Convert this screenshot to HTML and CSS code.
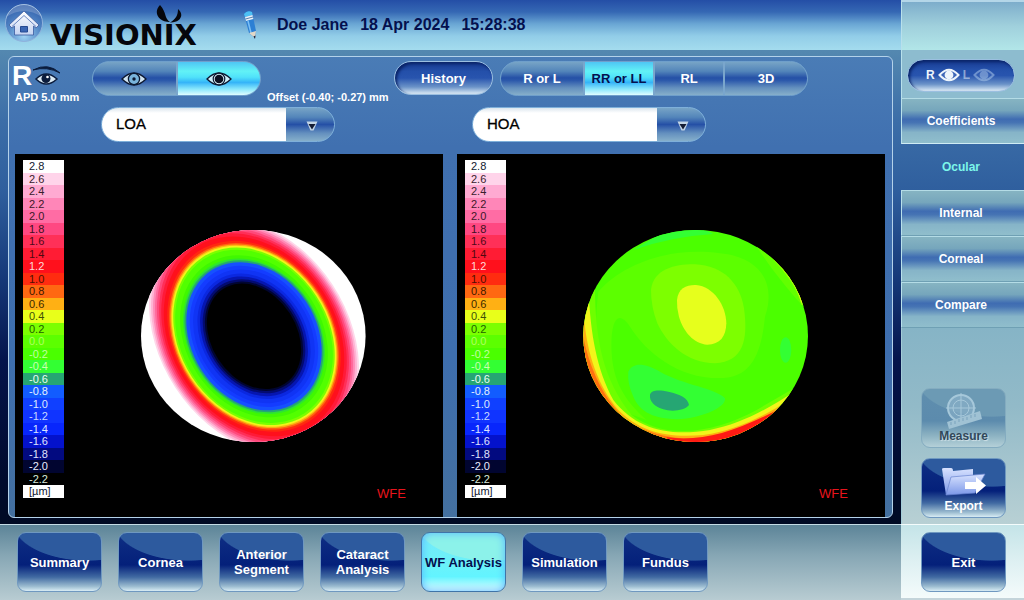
FILE: index.html
```html
<!DOCTYPE html>
<html lang="en">
<head>
<meta charset="utf-8">
<title>Visionix - WF Analysis</title>
<link rel="stylesheet" href="styles.css">
</head>
<body>
<div class="app">
  <header class="header">
    <button class="home" aria-label="Home">
      <svg width="40" height="40" viewBox="0 0 40 40" aria-hidden="true">
        <defs>
          <radialGradient id="ball" cx=".5" cy=".85" r=".9"><stop offset="0" stop-color="#9fd3f4"/><stop offset=".5" stop-color="#5287c6"/><stop offset="1" stop-color="#2a55a4"/></radialGradient>
          <linearGradient id="house" x2="0" y2="1"><stop offset="0" stop-color="#fff"/><stop offset="1" stop-color="#c4d3f2"/></linearGradient>
        </defs>
        <circle cx="20" cy="20" r="18.500" fill="url(#ball)" stroke="#8fb2dc"/>
        <path d="M2 14Q20 2 38 14A19 19 0 0 0 2 14Z" fill="#fff" opacity=".2"/>
        <path d="M20 8L35 22L32 25L29.500 23V32H10.500V23L8 25L5 22Z" fill="url(#house)" stroke="#3a5aa0" stroke-width=".8"/>
        <path d="M20 12.500L8 23.500M20 12.500L32 23.500" stroke="#6a86c0" stroke-width="1"/>
        <path d="M16.500 23.500h7v5.500h-7z" fill="#3a66b4" stroke="#264a92"/>
      </svg>
    </button>
    <div class="logo">VISIONIX
      <svg class="logo-mark" width="28" height="18" viewBox="0 0 28 18" aria-hidden="true">
        <path d="M5 0C-2 7 3 17 15 17C9 13 12 8 5 0Z"/>
        <path d="M23 4C30 10 25 18 15 17.500C21 14 23 10 23 4Z"/>
      </svg>
    </div>
    <svg class="pencil" width="16" height="30" viewBox="0 0 16 30" aria-hidden="true">
      <path d="M1 4Q4 0 9 2L13 21L12 28L6 23Z" fill="#2c7fd4"/>
      <path d="M1 4Q4 0 9 2L9.500 5L2 7Z" fill="#4cc0f4"/>
      <path d="M2 7L9.500 5L10.300 9L3 11Z" fill="#e8f1f8"/>
      <path d="M2.500 9L10 7" stroke="#5b7fae"/>
      <path d="M5 11L8 23" stroke="#7bc0f6" stroke-width="1.500"/>
      <path d="M6 23L13 21L12 28Z" fill="#e2d8c8"/>
      <path d="M10.500 26.500L12.500 25.500L12 29Z" fill="#223"/>
    </svg>
    <div class="patient"><span>Doe Jane</span><span>18 Apr 2024</span><span>15:28:38</span></div>
  </header>

  <main class="panel">
    <div class="toolbar">
      <div class="side">
        <div class="side-eye"><b>R</b>
          <svg width="28" height="22" viewBox="0 0 28 22" aria-hidden="true">
            <path d="M0 5Q15-3 27 8Q14 1 0 5Z" fill="#0b1c3c" stroke="#0b1c3c"/>
            <path d="M3 14Q13 4 24 14Q13 24 3 14Z" fill="#dbeaf4" stroke="#0b1c3c" stroke-width="1.500"/>
            <circle cx="13" cy="13.500" r="4.500" fill="#0b1c3c"/><circle cx="14.500" cy="12" r="1.300" fill="#fff"/>
          </svg>
        </div>
        <div class="note">APD 5.0 mm</div>
      </div>
      <div class="group eyes">
        <button class="seg" aria-label="Small pupil"><svg width="26" height="16" viewBox="0 0 26 16" aria-hidden="true"><path d="M1 8Q13-4 25 8Q13 20 1 8Z" fill="#cfe2f0" stroke="#0c1830" stroke-width="1.300"/><circle cx="13" cy="8" r="5.600" fill="#79b4dc" stroke="#0c1830" stroke-width="1.300"/><circle cx="13" cy="8" r="1.700" fill="#0c1830"/></svg></button>
        <button class="seg on" aria-label="Large pupil"><svg width="26" height="16" viewBox="0 0 26 16" aria-hidden="true"><path d="M1 8Q13-4 25 8Q13 20 1 8Z" fill="#cfeff8" stroke="#0c1830" stroke-width="1.300"/><circle cx="13" cy="8" r="5.800" fill="#d9eef6" stroke="#0c1830" stroke-width="1.200"/><circle cx="13" cy="8" r="4.300" fill="#0c1020"/></svg></button>
      </div>
      <div class="note offset">Offset (-0.40; -0.27) mm</div>
      <button class="pill">History</button>
      <div class="group views">
        <button class="seg wide">R or L</button>
        <button class="seg on">RR or LL</button>
        <button class="seg">RL</button>
        <button class="seg wide">3D</button>
      </div>
    </div>

    <div class="pickers">
      <div class="picker picker-first">
        <select aria-label="Left map"><option>LOA</option><option>HOA</option></select>
        <svg class="arrow" width="12" height="10" viewBox="0 0 12 10" aria-hidden="true"><path d="M.5.5H11.500L7.500 9.500H4.500Z" fill="#c3d5e6"/><path d="M2.500 3H9.500L6 8.500Z" fill="#141c34"/></svg>
      </div>
      <div class="picker">
        <select aria-label="Right map"><option>HOA</option><option>LOA</option></select>
        <svg class="arrow" width="12" height="10" viewBox="0 0 12 10" aria-hidden="true"><path d="M.5.5H11.500L7.500 9.500H4.500Z" fill="#c3d5e6"/><path d="M2.500 3H9.500L6 8.500Z" fill="#141c34"/></svg>
      </div>
    </div>

    <div class="maps">
      <section class="map" aria-label="LOA map">
        <ul class="scale">
          <li class="c1">2.8</li><li class="c2">2.6</li><li class="c3">2.4</li><li class="c4">2.2</li><li class="c5">2.0</li><li class="c6">1.8</li><li class="c7">1.6</li><li class="c8">1.4</li><li class="c9">1.2</li><li class="c10">1.0</li><li class="c11">0.8</li><li class="c12">0.6</li><li class="c13">0.4</li><li class="c14">0.2</li><li class="c15">0.0</li><li class="c16">-0.2</li><li class="c17">-0.4</li><li class="c18">-0.6</li><li class="c19">-0.8</li><li class="c20">-1.0</li><li class="c21">-1.2</li><li class="c22">-1.4</li><li class="c23">-1.6</li><li class="c24">-1.8</li><li class="c25">-2.0</li><li class="c26">-2.2</li><li class="c1">[µm]</li>
        </ul>
        <svg class="plot" viewBox="64 160 371 338">
          <defs><clipPath id="pupil"><ellipse cx="253.300" cy="336" rx="112.300" ry="106"/></clipPath></defs>
          <g clip-path="url(#pupil)">
            <path d="M130 220H380V450H130Z" fill="#fff"/>
            <g transform="translate(254 336.300) rotate(-33.200)">
              <ellipse rx="94" ry="127" fill="#ffd7ea"/>
              <ellipse rx="92.500" ry="124" fill="#ffb4d4"/>
              <ellipse rx="91" ry="121" fill="#ff8cb8"/>
              <ellipse rx="89.400" ry="118.500" fill="#ff6a9c"/>
              <ellipse rx="87.800" ry="116" fill="#ff4a7c"/>
              <ellipse rx="86" ry="113" fill="#ff2f58"/>
              <ellipse rx="84.300" ry="110" fill="#ff1a38"/>
              <ellipse rx="82.300" ry="106.500" fill="#ff101c"/>
              <ellipse rx="79.500" ry="101.500" fill="#ff2a10"/>
              <ellipse rx="78" ry="99" fill="#ff6410"/>
              <ellipse rx="76.800" ry="97.500" fill="#ffae12"/>
              <ellipse rx="75.700" ry="96.200" fill="#f2f51a"/>
              <ellipse rx="74.200" ry="94.300" fill="#7aff00"/>
              <ellipse rx="72.500" ry="92" fill="#52ff00"/>
              <ellipse rx="68" ry="86" fill="#40f800"/>
              <ellipse rx="65.500" ry="82.500" fill="#2fe52f"/>
              <ellipse rx="64.200" ry="80.500" fill="#26a673"/>
              <ellipse rx="62.500" ry="78.500" fill="#1650ff"/>
              <ellipse rx="59" ry="75" fill="#143cff"/>
              <ellipse rx="56" ry="71" fill="#1034f4"/>
              <ellipse rx="51.500" ry="67" fill="#0b28e0"/>
              <ellipse rx="49" ry="64" fill="#0616b0"/>
              <ellipse rx="46.500" ry="61" fill="#030b70"/>
              <ellipse rx="44.500" ry="58.500" fill="#010530"/>
              <ellipse rx="42.500" ry="56.500" fill="#000"/>
            </g>
          </g>
          <text class="wfe" x="377" y="498">WFE</text>
        </svg>
      </section>
      <section class="map" aria-label="HOA map">
        <ul class="scale">
          <li class="c1">2.8</li><li class="c2">2.6</li><li class="c3">2.4</li><li class="c4">2.2</li><li class="c5">2.0</li><li class="c6">1.8</li><li class="c7">1.6</li><li class="c8">1.4</li><li class="c9">1.2</li><li class="c10">1.0</li><li class="c11">0.8</li><li class="c12">0.6</li><li class="c13">0.4</li><li class="c14">0.2</li><li class="c15">0.0</li><li class="c16">-0.2</li><li class="c17">-0.4</li><li class="c18">-0.6</li><li class="c19">-0.8</li><li class="c20">-1.0</li><li class="c21">-1.2</li><li class="c22">-1.4</li><li class="c23">-1.6</li><li class="c24">-1.8</li><li class="c25">-2.0</li><li class="c26">-2.2</li><li class="c1">[µm]</li>
        </ul>
        <svg class="plot" viewBox="506 160 371 338">
          <defs><clipPath id="pupil2"><ellipse cx="377" cy="348" rx="337" ry="318"/></clipPath></defs>
          <g transform="translate(570 220) scale(.3333)">
            <g clip-path="url(#pupil2)">
              <path d="M0 0H750V690H0Z" fill="#4bff00"/>
              <path d="M85 215C160 130 300 80 450 100C570 110 620 190 585 290C575 390 550 470 460 474C330 480 230 400 180 320C140 260 120 310 125 400C130 480 160 540 230 600L120 560C80 470 70 330 85 215Z" fill="#5cff00"/>
              <path d="M560 80C620 170 670 230 720 280V150L600 60Z" fill="#62ff00"/>
              <path d="M190 90Q300 50 430 42Q400 20 300 25Z" fill="#33ff33"/>
              <path d="M243 210C250 145 320 132 375 133C460 137 510 190 522 265C535 360 520 425 435 430C350 430 290 370 262 310Q243 260 243 210Z" fill="#7dff00"/>
              <path d="M321 240C324 205 350 194 378 195C430 200 468 255 469 310C468 350 450 374 412 374C370 370 340 335 327 290Q320 265 321 240Z" fill="#e6ff1c"/>
              <path d="M175 455C190 425 225 430 270 455C340 495 440 505 465 535C470 560 400 595 320 598C240 595 205 570 188 525Q172 490 175 455Z" fill="#33ff33"/>
              <path d="M240 525C243 508 270 510 295 515C330 522 355 535 357 555C345 572 305 576 280 568C255 560 238 545 240 525Z" fill="#26a673"/>
              <ellipse cx="647" cy="390" rx="17" ry="38" fill="#33ff33"/>
              <path d="M75 200C75 360 100 480 185 585C290 665 440 635 560 570L680 500V690H0V200Z" fill="#6eff00"/>
              <path d="M56 220C62 340 80 450 130 540C200 630 300 650 420 630C510 612 590 570 680 510V690H0V220Z" fill="#f2f51a"/>
              <path d="M42 290C50 400 85 500 145 570C210 635 290 655 400 645C490 632 570 595 650 545V690H0V290Z" fill="#ffae12"/>
              <path d="M40 350C55 430 90 510 135 565L160 595C240 650 320 660 400 654C500 640 560 608 650 552V690H0V350Z" fill="#ff7010"/>
              <path d="M290 652C400 666 500 635 640 560V690H290Z" fill="#ff1a14"/>
              <path d="M590 98C650 160 680 200 695 255L730 250V100Z" fill="#9dff00"/>
              <path d="M600 106C655 160 680 200 694 248L730 250V100Z" fill="#f2f51a"/>
              <path d="M618 120C660 160 682 200 694 240L730 240V100Z" fill="#ffc018"/>
            </g>
          </g>
          <text class="wfe" x="819" y="498">WFE</text>
        </svg>
      </section>
    </div>
  </main>

  <aside class="sidebar">
    <div class="side-top"></div>
    <div class="side-toggle">
      <button class="pill eye-toggle" aria-label="Right or left eye">
        <b>R</b><svg width="22" height="14" viewBox="0 0 22 14" aria-hidden="true"><path d="M1.500 7Q11-3.500 20.500 7Q11 17.500 1.500 7Z" fill="#3f68b8" stroke="#eef5fb" stroke-width="2"/><circle cx="11" cy="7" r="4.400" fill="#eef5fb"/></svg>
        <b class="dim">L</b><svg class="dim" width="22" height="14" viewBox="0 0 22 14" aria-hidden="true"><path d="M1.500 7Q11-3.500 20.500 7Q11 17.500 1.500 7Z" fill="#3f68b8" stroke="#b4d0ee" stroke-width="2"/><circle cx="11" cy="7" r="4.400" fill="#b4d0ee"/></svg>
      </button>
    </div>
    <nav class="tabs">
      <button class="tab">Coefficients</button>
      <button class="tab current">Ocular</button>
      <button class="tab">Internal</button>
      <button class="tab">Corneal</button>
      <button class="tab">Compare</button>
    </nav>
    <div class="tools">
      <button class="tile tool off" disabled>
        <svg width="42" height="38" viewBox="0 0 42 38" aria-hidden="true"><g fill="none" stroke="#a6c8da" stroke-width="2"><circle cx="18" cy="17" r="13" fill="#8db4cc" fill-opacity=".6"/><circle cx="18" cy="17" r="8" stroke-width="1"/><path d="M18 2V32M3 17H33" stroke-width="1"/></g><path d="M4 31L37 20L39 28L6 38Z" fill="#a0c2d4"/><path d="M8 31v3M12 30v3M16 28v3M20 27v3M24 26v3M28 24v3M32 23v3" stroke="#7ba3bd"/></svg>
        <span>Measure</span>
      </button>
      <button class="tile tool">
        <svg width="46" height="32" viewBox="0 0 46 32" aria-hidden="true">
          <defs><linearGradient id="folder" x2="0" y2="1"><stop offset="0" stop-color="#d8e2ff"/><stop offset="1" stop-color="#7c98e8"/></linearGradient></defs>
          <path d="M1 2Q1 1 3 1H10Q12 1 12 4L32 2V9L5 28Z" fill="url(#folder)"/>
          <path d="M10 10L44 7L34 26L5 28Z" fill="url(#folder)" stroke="#6984d0" stroke-width=".7"/>
          <path d="M24 15H35V10L45 18.500L35 27V22H24Z" fill="#fff"/>
        </svg>
        <span>Export</span>
      </button>
    </div>
    <div class="side-foot"><button class="tile">Exit</button></div>
  </aside>

  <nav class="modes">
    <button class="tile">Summary</button>
    <button class="tile">Cornea</button>
    <button class="tile">Anterior<br>Segment</button>
    <button class="tile">Cataract<br>Analysis</button>
    <button class="tile active">WF Analysis</button>
    <button class="tile">Simulation</button>
    <button class="tile">Fundus</button>
  </nav>
</div>
</body>
</html>
```
FILE: styles.css
```css
* { box-sizing: border-box; }

body {
  margin: 0;
  font-family: "Liberation Sans", Arial, sans-serif;
  font-size: 13px;
  color: #fff;
}

button {
  margin: 0;
  padding: 0;
  border: 0;
  background: none;
  color: inherit;
  font: bold 13px/15px "Liberation Sans", Arial, sans-serif;
  cursor: pointer;
}

svg { display: block; }

.app {
  display: grid;
  grid-template-columns: minmax(0, 1fr) 123px;
  grid-template-rows: 50px 1fr 76px;
  min-height: 100vh;
  background: linear-gradient(#5488b0 50px, #3c6ea8 120px, #2f5f9e 190px, #153878 280px, #04144c 360px, #000a2c 480px, #000a24 524px);
}

/* Header */
.header {
  display: flex;
  align-items: center;
  padding-left: 4px;
  background: linear-gradient(#244ea6, #3568b4 12px, #6aa6d4 24px, #92cde8 36px, #a4dcee 50px);
}

.logo {
  position: relative;
  margin-left: 6px;
  padding-top: 20px;
  color: #05060c;
  font: bold 29px/32px "DejaVu Sans", sans-serif;
}

.logo-mark {
  position: absolute;
  right: 14px;
  top: 6px;
  fill: #05060c;
}

.home { height: 40px; margin-bottom: 4px; }
.pencil { margin-left: 46px; }

.patient {
  display: flex;
  gap: 12px;
  margin-left: 18px;
  color: #04104e;
  font-size: 16px;
  font-weight: bold;
}

/* Main panel */
.panel {
  display: flex;
  flex-direction: column;
  margin: 6px 8px;
  padding: 4px 7px 0 6px;
  border: 1px solid #b4d2ea;
  border-radius: 6px;
  overflow: hidden;
  background: linear-gradient(#4a7cb6, #4070b0 90px, #3e6eae 300px, #44709f);
}

.toolbar {
  display: flex;
  align-items: flex-start;
  height: 46px;
}

.side { width: 77px; }

.side-eye {
  display: flex;
  align-items: center;
  gap: 1px;
  height: 29px;
}

.side-eye b { font: bold 28px/28px "Liberation Sans", Arial, sans-serif; margin-left: -3px; }

.note { font-size: 11px; line-height: 14px; font-weight: bold; white-space: nowrap; }

.offset { width: 127px; margin: 29px 0 0 6px; }

.group {
  display: flex;
  gap: 2px;
  height: 35px;
  border-radius: 18px;
  overflow: hidden;
  border: 1px solid #6f9fcb;
  background: #7aa6cc;
}

.eyes { width: 169px; }
.eyes .seg { flex: 1; }
.views { width: 308px; margin-left: 7px; }

.seg {
  flex: 69;
  display: flex;
  align-items: center;
  justify-content: center;
  background: linear-gradient(#77a4c6, #5385ba 28%, #2550a6 48%, #2c59ab 56%, #638fbe 78%, #86afca);
}

.seg.wide { flex: 83; }

.seg.on {
  color: #04104e;
  background: linear-gradient(#4fc6f4, #62f2f6 28%, #50e2fa 46%, #35b4f8 62%, #8ae8fc 82%, #e0fcff);
}

.pill {
  width: 99px;
  height: 34px;
  border-radius: 17px;
  border: 1px solid #9bbfe0;
  background: linear-gradient(#16388e, #2450aa 30%, #2854ae 50%, #6b93c8 78%, #dcebf6);
  box-shadow: inset 2px 2px 3px #0a2468;
}

/* Map pickers */
.pickers, .maps {
  display: grid;
  grid-template-columns: repeat(2, minmax(0, 1fr));
  column-gap: 14px;
}

.pickers { height: 47px; }

.picker { position: relative; width: 234px; height: 35px; margin-left: 15px; }
.picker-first { margin-left: 86px; }

.picker select {
  appearance: none;
  width: 100%;
  height: 100%;
  padding: 0 50px 2px 14px;
  border: 1px solid #7fb0da;
  border-radius: 18px;
  color: #000;
  font: 15px "Liberation Sans", Arial, sans-serif;
  -webkit-text-stroke: .3px #000;
  background:
    linear-gradient(#dce6ee, #fff 5px) 0 0 / 184px 100% no-repeat,
    linear-gradient(#77a4c6, #5385ba 28%, #2550a6 50%, #638fbe 76%, #86afca);
}

.arrow { position: absolute; right: 17px; top: 14px; pointer-events: none; }

/* Maps */
.maps { flex: 1; }

.map { display: flex; padding: 6px 8px 19px; background: #000; }

.scale {
  display: grid;
  grid-template-rows: repeat(27, minmax(0, 1fr));
  width: 41px;
  margin: 0;
  padding: 0;
  list-style: none;
  font-size: 11px;
  line-height: 12px;
}

.scale li { padding-left: 6px; }

.plot { flex: 1; width: 0; min-width: 0; min-height: 0; overflow: visible; }
.wfe { font: 13px "Liberation Sans", Arial, sans-serif; fill: #e8141c; }

.c1 { background: #fff; color: #101830; }
.c2 { background: #ffd4ea; color: #38202c; }
.c3 { background: #ffaad2; color: #38202c; }
.c4 { background: #ff86b8; color: #401828; }
.c5 { background: #ff6ca4; color: #401828; }
.c6 { background: #ff4882; color: #401020; }
.c7 { background: #ff3058; color: #500818; }
.c8 { background: #ff1c34; color: #500810; }
.c9 { background: #ff101c; color: #ffd8d8; }
.c10 { background: #ff2c10; color: #501000; }
.c11 { background: #ff6812; color: #401800; }
.c12 { background: #ffb014; color: #402800; }
.c13 { background: #e8ff1a; color: #405008; }
.c14 { background: #7cff00; color: #206000; }
.c15 { background: #5cff00; color: #b0ff60; }
.c16 { background: #4aff00; color: #c0ffa0; }
.c17 { background: #33ff33; color: #c8ffb0; }
.c18 { background: #26a673; color: #e8fff4; }
.c19 { background: #125cff; color: #e4f0ff; }
.c20 { background: #1040ff; color: #dce8ff; }
.c21 { background: #1034ff; color: #c8d8ff; }
.c22 { background: #0826fc; color: #dce4ff; }
.c23 { background: #0412cc; color: #e0e4ff; }
.c24 { background: #020a80; color: #e0e4ff; }
.c25 { background: #010530; color: #e8ecff; }
.c26 { background: #000; color: #d8e8dc; }

/* Sidebar */
.sidebar {
  grid-column: 2;
  grid-row: 1 / 4;
  display: flex;
  flex-direction: column;
}

.side-top {
  height: 50px;
  border-top: 2px solid #b4d6e8;
  border-left: 1px solid #b8e0ec;
  background: linear-gradient(#7dadcb, #a0d0dc 24px, #b2e6e8);
}

.side-toggle {
  display: flex;
  justify-content: center;
  height: 48px;
  padding: 9px 5px 0 0;
  border-left: 1px solid #b8e0ec;
  background: #8dbccf;
}

.eye-toggle {
  display: flex;
  align-items: center;
  justify-content: center;
  gap: 3px;
  width: 108px;
  height: 33px;
  padding-bottom: 2px;
}

.eye-toggle b { font: bold 12px/14px "Liberation Sans", Arial, sans-serif; color: #eef5fb; }
.eye-toggle .dim { opacity: .5; }

.tabs { display: flex; flex-direction: column; }

.tab {
  height: 46px;
  font-size: 12px;
  padding-right: 4px;
  border-left: 1px solid #b8e0ec;
  border-top: 1px solid #b4dce6;
  border-bottom: 1px solid #6fa0b4;
  background: linear-gradient(#86b4c2, #76a6bc 26%, #3f6cb2 46%, #4674b4 54%, #86b4c8 76%, #90becc);
}

.tab:first-child { border-bottom-color: #d0ecf4; }
.tab.current { background: none; border-color: transparent; color: #7cf6ea; }

.tools {
  flex: 1;
  display: flex;
  flex-direction: column;
  align-items: flex-end;
  justify-content: flex-end;
  gap: 10px;
  padding: 0 18px 6px 0;
  border-left: 1px solid #a4ccd8;
  background: linear-gradient(#86b4c6, #92bac8 40%, #b8d0d4);
}

.side-foot {
  display: flex;
  justify-content: flex-end;
  align-items: flex-start;
  height: 76px;
  padding: 7px 18px 0 0;
  border-top: 1px solid #f4fcfc;
  border-bottom: 2px solid #c4d4da;
  background: linear-gradient(#c4e4e8, #def0f2 50%, #f4fbfb);
}

/* Tile buttons */
.tile {
  width: 85px;
  height: 60px;
  border: 1px solid #6f98c0;
  border-radius: 9px;
  background:
    radial-gradient(ellipse 76px 40px at 84% -12px, #2d5a9e 98%, #2d5a9e00 100%),
    linear-gradient(#0f2f84, #04207a 55%, #416aa2 76%, #9cbcd0 92%, #d8ecf4);
}

.tile.active {
  color: #04104e;
  border-color: #3f74a8;
  background:
    radial-gradient(ellipse 76px 40px at 84% -12px, #8cf2ea 98%, #8cf2ea00 100%),
    linear-gradient(#74e8fc, #6cf2f8 50%, #62f4ff 75%, #e4feff);
  box-shadow: inset 0 0 8px #58b4ff;
}

.tool {
  display: flex;
  flex-direction: column;
  align-items: center;
  justify-content: flex-end;
  padding-bottom: 3px;
  font-size: 12px;
}

.off {
  border-color: #84acc0;
  color: #31485a;
  text-shadow: 1px 1px 1px #d4e4ea;
  background:
    radial-gradient(ellipse 76px 40px at 84% -12px, #6c9ab4 98%, #6c9ab400 100%),
    linear-gradient(#5f8eae, #5c8bad 55%, #8cb2c2 80%, #b4d0d8);
}

.modes {
  grid-column: 1;
  display: flex;
  align-items: flex-start;
  gap: 16px;
  padding: 7px 17px 0;
  border-top: 1px solid #c4dce6;
  background: linear-gradient(#5c8498, #86a6b4 40%, #b8ccd2);
}
```
